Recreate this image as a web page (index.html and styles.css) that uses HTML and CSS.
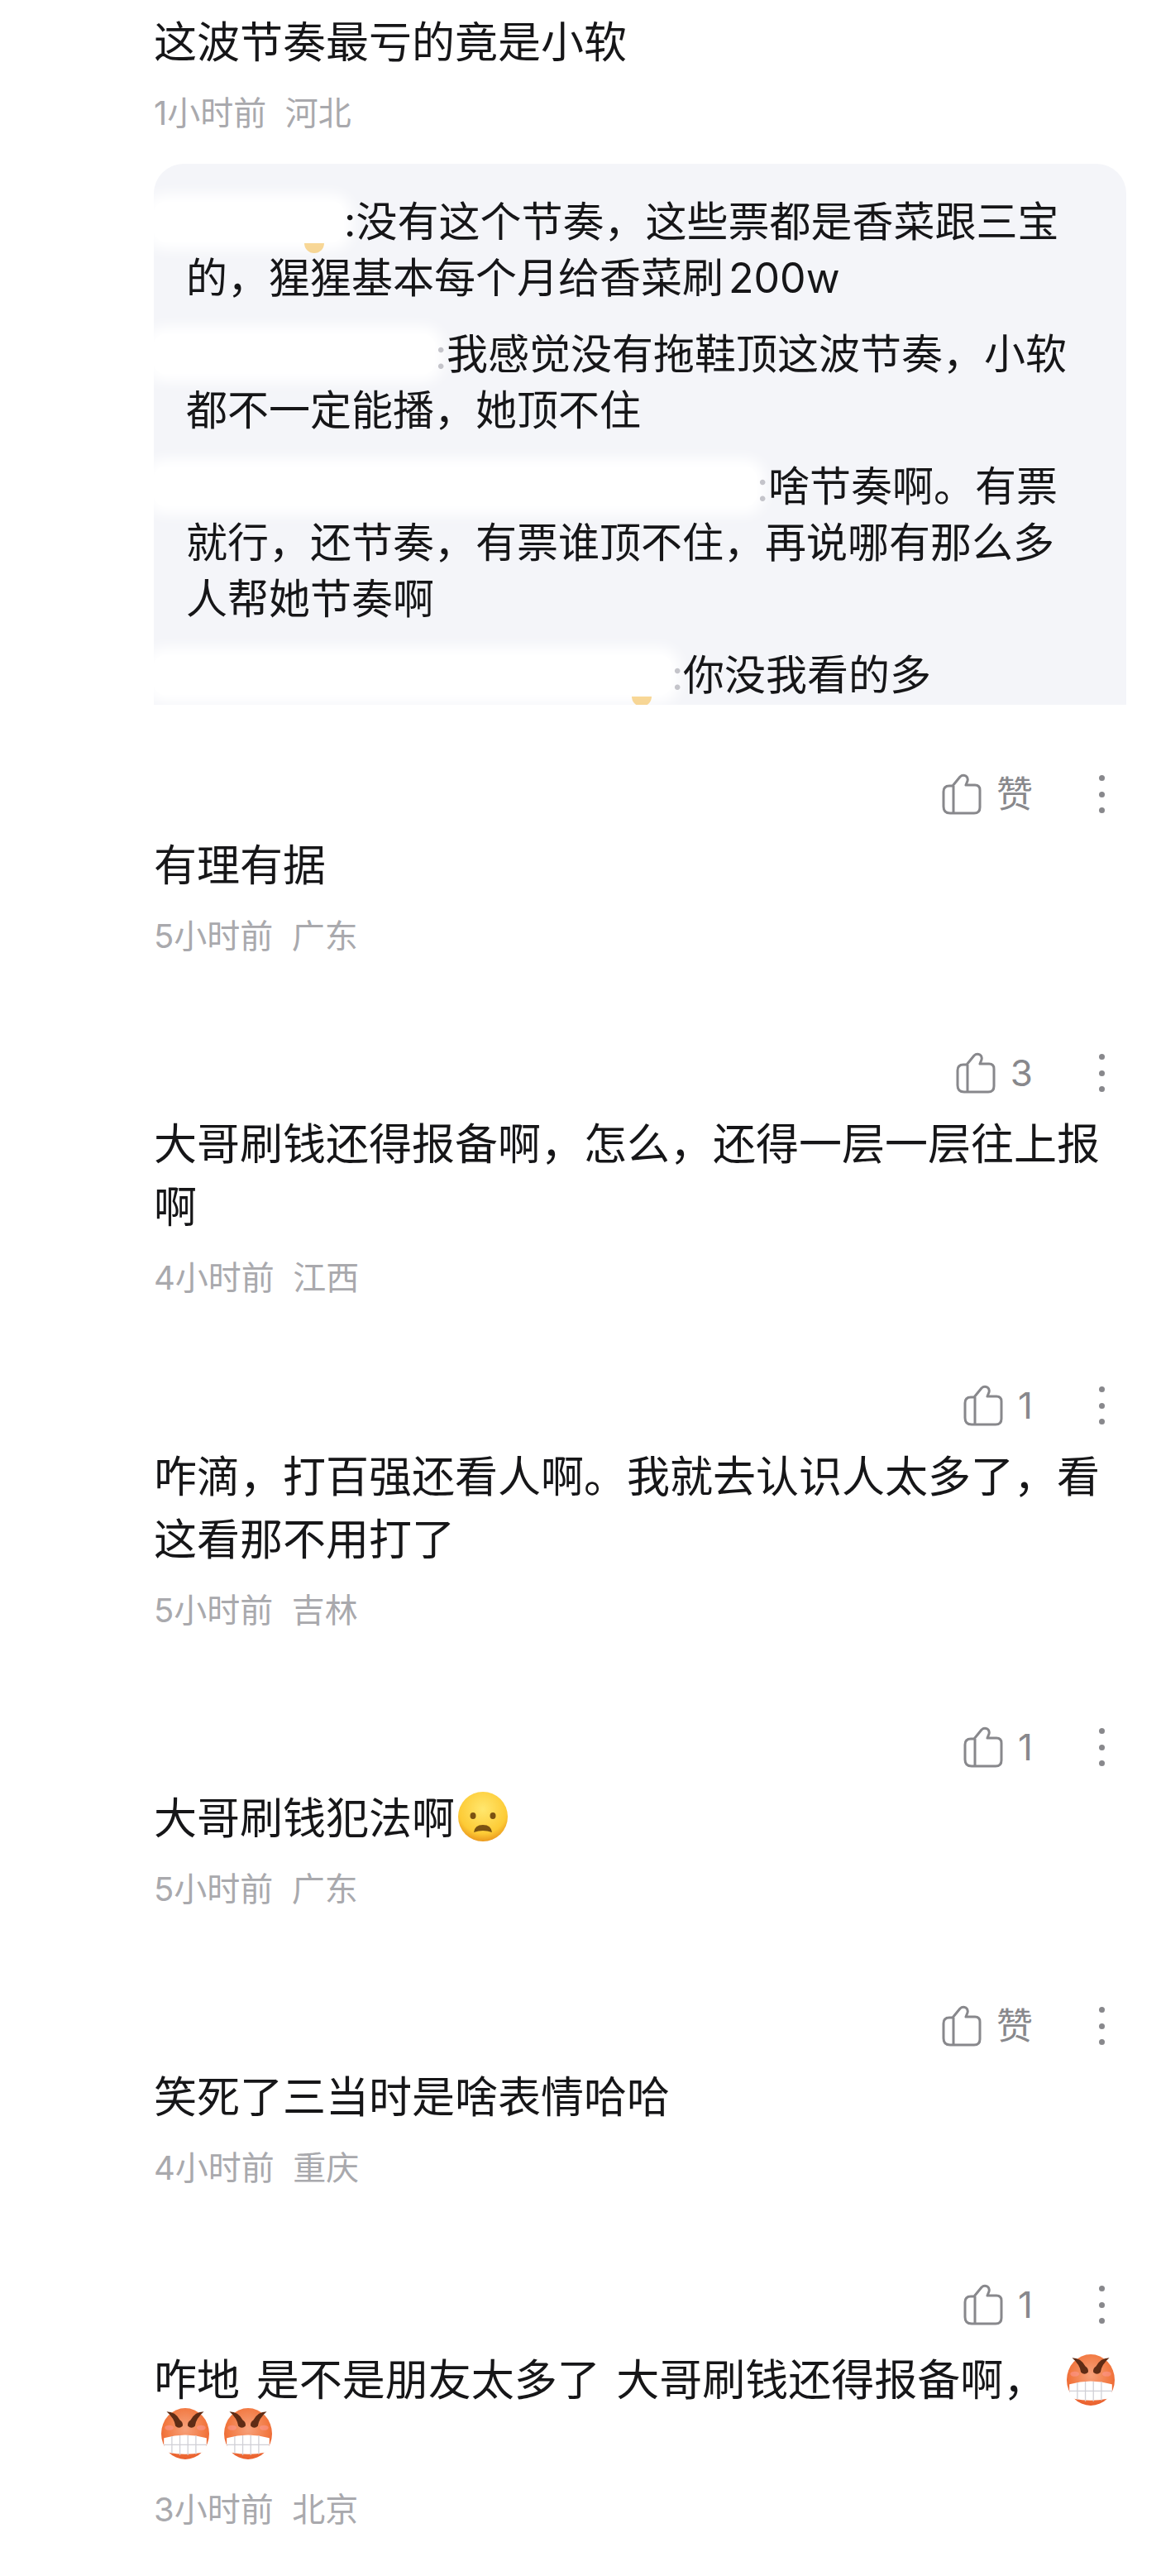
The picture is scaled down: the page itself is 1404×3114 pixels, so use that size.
FILE: index.html

```html
<!DOCTYPE html>
<html lang="zh-CN">
<head>
    <meta charset="UTF-8">
    <meta name="viewport" content="width=device-width, initial-scale=1.0">
    <title>评论</title>
    <link rel="stylesheet" href="styles.css">
</head>
<body>
    <!-- shared icons -->
    <svg class="defs" width="0" height="0" aria-hidden="true">
        <defs>
            <radialGradient id="sadFill" cx="50%" cy="35%" r="65%">
                <stop offset="0" stop-color="#ffe76e"/>
                <stop offset="0.75" stop-color="#fdcb36"/>
                <stop offset="1" stop-color="#eb9a1e"/>
            </radialGradient>
            <radialGradient id="angryFill" cx="50%" cy="40%" r="62%">
                <stop offset="0" stop-color="#f7a27c"/>
                <stop offset="0.7" stop-color="#f2773f"/>
                <stop offset="1" stop-color="#e85c2b"/>
            </radialGradient>
            <symbol id="thumb" viewBox="0 0 48 50">
                <path d="M9 15H13L22 4Q25 1 29 3Q32 5 31 9L29 14H40Q46 14 46 20V41Q46 48 39 48H10Q2 48 2 40V22Q2 15 9 15ZM14 15V48" fill="none" stroke="#88888c" stroke-width="3" stroke-linejoin="round"/>
            </symbol>
            <symbol id="sad" viewBox="0 0 60 60">
                <circle cx="30" cy="30" r="30" fill="url(#sadFill)"/>
                <ellipse cx="18" cy="29" rx="3.5" ry="4" fill="#7a5212"/>
                <ellipse cx="42" cy="29" rx="3.5" ry="4" fill="#7a5212"/>
                <path d="M19 49Q20 40 30 40Q40 40 41 49Q30 45 19 49Z" fill="#7a5212"/>
            </symbol>
            <symbol id="angry" viewBox="0 0 54 62" preserveAspectRatio="none">
                <ellipse cx="27" cy="31" rx="27" ry="30" fill="url(#angryFill)"/>
                <path d="M6 5Q16 5 21 15Q25 18 24 22Q20 26 16 22Q15 13 6 5ZM48 5Q38 5 33 15Q29 18 30 22Q34 26 38 22Q39 13 48 5Z" fill="#5f2c15"/>
                <ellipse cx="9" cy="24" rx="5" ry="3" fill="#f99" opacity="0.5"/>
                <ellipse cx="45" cy="24" rx="5" ry="3" fill="#f99" opacity="0.5"/>
                <path d="M3 36Q27 29 51 36Q52 50 46 53Q27 57 8 53Q2 50 3 36Z" fill="#fff"/>
                <path d="M12 34V54M21 33V56M30 33V56M39 33V55M3 44H51" stroke="#d0d0d6" stroke-width="1.2" fill="none"/>
            </symbol>
        </defs>
    </svg>

    <div class="comments">
        <section class="comment comment-first">
            <p class="comment-text">这波节奏最亏的竟是小软</p>
            <p class="comment-meta">1小时前&nbsp; 河北</p>
            <div class="quote">
                <p><span class="smear smear-a smear-gold"></span>:没有这个节奏，这些票都是香菜跟三宝的，猩猩基本每个月给香菜刷 200w</p>
                <p><span class="smear smear-b smear-colon"></span>我感觉没有拖鞋顶这波节奏，小软都不一定能播，她顶不住</p>
                <p><span class="smear smear-c smear-colon"></span>啥节奏啊。有票就行，还节奏，有票谁顶不住，再说哪有那么多人帮她节奏啊</p>
                <p><span class="smear smear-d smear-colon smear-gold"></span>你没我看的多</p>
            </div>
        </section>

        <section class="comment">
            <div class="comment-actions">
                <svg class="thumb"><use href="#thumb"/></svg>
                <span class="like-count">赞</span>
                <span class="more"><i></i><i></i><i></i></span>
            </div>
            <p class="comment-text">有理有据</p>
            <p class="comment-meta">5小时前&nbsp; 广东</p>
        </section>

        <section class="comment comment-tight">
            <div class="comment-actions">
                <svg class="thumb"><use href="#thumb"/></svg>
                <span class="like-count">3</span>
                <span class="more"><i></i><i></i><i></i></span>
            </div>
            <p class="comment-text">大哥刷钱还得报备啊，怎么，还得一层一层往上报啊</p>
            <p class="comment-meta">4小时前&nbsp; 江西</p>
        </section>

        <section class="comment">
            <div class="comment-actions">
                <svg class="thumb"><use href="#thumb"/></svg>
                <span class="like-count">1</span>
                <span class="more"><i></i><i></i><i></i></span>
            </div>
            <p class="comment-text">咋滴，打百强还看人啊。我就去认识人太多了，看这看那不用打了</p>
            <p class="comment-meta">5小时前&nbsp; 吉林</p>
        </section>

        <section class="comment">
            <div class="comment-actions">
                <svg class="thumb"><use href="#thumb"/></svg>
                <span class="like-count">1</span>
                <span class="more"><i></i><i></i><i></i></span>
            </div>
            <p class="comment-text">大哥刷钱犯法啊<svg class="emoji"><use href="#sad"/></svg></p>
            <p class="comment-meta">5小时前&nbsp; 广东</p>
        </section>

        <section class="comment">
            <div class="comment-actions">
                <svg class="thumb"><use href="#thumb"/></svg>
                <span class="like-count">赞</span>
                <span class="more"><i></i><i></i><i></i></span>
            </div>
            <p class="comment-text">笑死了三当时是啥表情哈哈</p>
            <p class="comment-meta">4小时前&nbsp; 重庆</p>
        </section>

        <section class="comment">
            <div class="comment-actions">
                <svg class="thumb"><use href="#thumb"/></svg>
                <span class="like-count">1</span>
                <span class="more"><i></i><i></i><i></i></span>
            </div>
            <p class="comment-text comment-text-emoji">咋地 是不是朋友太多了 大哥刷钱还得报备啊，<svg class="emoji-angry emoji-angry-first"><use href="#angry"/></svg><svg class="emoji-angry"><use href="#angry"/></svg><svg class="emoji-angry"><use href="#angry"/></svg></p>
            <p class="comment-meta comment-meta-far">3小时前&nbsp; 北京</p>
        </section>
    </div>
</body>
</html>
```

FILE: styles.css

```css
* {
    box-sizing: border-box;
}

body {
    margin: 0;
    background: #ffffff;
    color: #161618;
    font-family: "Inter", "Noto Sans CJK SC", sans-serif;
}

p {
    margin: 0;
}

.defs {
    position: absolute;
}

.comments {
    padding: 14px 42px 0 186px;
}

.comment {
    margin-bottom: 107px;
}

.comment-first {
    margin-bottom: 78px;
}

.comment-tight {
    margin-bottom: 96px;
}

/* like row sits above the comment text */
.comment-actions {
    display: flex;
    align-items: center;
    justify-content: flex-end;
    height: 60px;
    margin-bottom: 19px;
    color: #88888c;
    font-size: 44px;
}

.thumb {
    width: 48px;
    height: 50px;
    margin-right: 18px;
}

.like-count {
    line-height: 60px;
}

.more {
    display: flex;
    flex-direction: column;
    gap: 12.5px;
    margin-left: 80px;
    margin-right: 26px;
}

.more i {
    display: block;
    width: 7px;
    height: 7px;
    border-radius: 50%;
    background: #88888c;
}

.comment-text {
    font-size: 52px;
    line-height: 76px;
}

.comment-meta {
    margin-top: 19px;
    color: #a9a9ad;
    font-size: 40px;
    line-height: 56px;
}

.comment-meta-far {
    margin-top: 31px;
}

.emoji {
    width: 60px;
    height: 60px;
    margin-left: 4px;
    vertical-align: -9px;
}

.emoji-angry {
    width: 58px;
    height: 64px;
    margin: 0 9px;
    vertical-align: -13px;
}

.emoji-angry-first {
    margin-left: 25px;
}

.comment-text-emoji {
    margin-top: 29px;
    line-height: 65px;
    word-spacing: 5px;
}

/* quoted replies, cut off flat at the bottom */
.quote {
    isolation: isolate;
    overflow: hidden;
    height: 654px;
    margin-top: 33px;
    padding: 36px 40px 0 39px;
    border-radius: 36px 36px 0 0;
    background: #f4f5f9;
    font-size: 50px;
    line-height: 68px;
    word-spacing: -8px;
}

.quote p {
    margin-bottom: 24px;
}

/* names wiped out with a soft white brush */
.smear {
    display: inline-block;
    position: relative;
    z-index: -1;
    height: 48px;
    margin-left: -39px;
    vertical-align: -6px;
    background: #ffffff;
    box-shadow: 0 0 16px 10px #ffffff;
    border-radius: 14px;
}

.smear-gold::after {
    content: "";
    position: absolute;
    right: 24px;
    bottom: -14px;
    width: 24px;
    height: 12px;
    border-radius: 0 0 14px 14px;
    background: #f5c66a;
    opacity: 0.7;
}

/* what is left of the colon after the name */
.smear-colon {
    margin-right: 14px;
}

.smear-colon::before {
    content: ":";
    position: absolute;
    left: 100%;
    bottom: 0;
    color: #c4c4ca;
    line-height: 48px;
}

.smear-a {
    width: 230px;
}

.smear-b {
    width: 340px;
}

.smear-c {
    width: 729px;
}

.smear-d {
    width: 626px;
}
```
